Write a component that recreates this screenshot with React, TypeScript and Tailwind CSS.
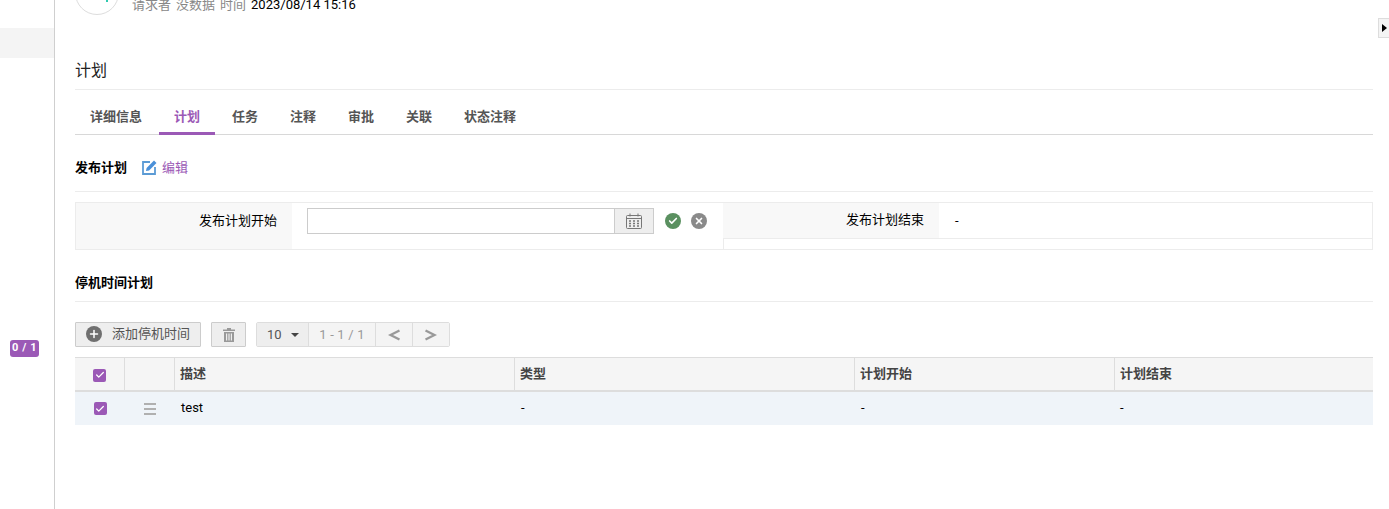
import { Check, X, Plus } from "lucide-react";

const FONT = "font-['Roboto','Noto_Sans_CJK_SC',sans-serif]";

const TABS = ["详细信息", "计划", "任务", "注释", "审批", "关联", "状态注释"];

function PurpleCheck() {
  return (
    <span className="flex h-[13px] w-[13px] items-center justify-center rounded-[2px] bg-[#9b59b6]">
      <Check className="h-[10px] w-[10px] text-white" strokeWidth={3} />
    </span>
  );
}

function CalendarIcon() {
  return (
    <svg width="16" height="16" viewBox="0 0 16 16" fill="none" stroke="#777" strokeWidth="1">
      <rect x="0.5" y="2.5" width="15" height="13" rx="1" />
      <path d="M0.5 5.5h15M4 0.5v3M12 0.5v3" />
      <path d="M3 8h2M7 8h2M11 8h2M3 10.5h2M7 10.5h2M11 10.5h2M3 13h2M7 13h2M11 13h2" strokeWidth="1.4" />
    </svg>
  );
}

function EditIcon() {
  return (
    <svg width="15" height="15" viewBox="0 0 15 15" fill="none">
      <path d="M8 2H1v12h12V7" stroke="#5b9bd5" strokeWidth="1.8" />
      <path d="M4 11l.6-3.1L12 .5l2.5 2.5L7.1 10.4z" fill="#4a90d9" />
    </svg>
  );
}

function TrashIcon() {
  return (
    <svg width="12" height="14" viewBox="0 0 12 14">
      <path d="M4 0h4v1.5h4V3H0V1.5h4z" fill="#999999" />
      <path d="M1 4h10v10H1zM3 5.5v7h1.2v-7zM5.4 5.5v7h1.2v-7zM7.8 5.5v7H9v-7z" fill="#999999" fillRule="evenodd" />
    </svg>
  );
}

function HandleIcon() {
  return (
    <svg width="12" height="12" viewBox="0 0 12 12" fill="#b0b0b0">
      <rect y="0" width="12" height="2" />
      <rect y="5" width="12" height="2" />
      <rect y="10" width="12" height="2" />
    </svg>
  );
}

function Arrow({ dir }: { dir: "left" | "right" }) {
  return (
    <svg width="12" height="12" viewBox="0 0 12 12" fill="none" stroke="#999999" strokeWidth="2.4">
      <path d={dir === "left" ? "M11.5 1.5L2.5 6l9 4.5" : "M0.5 1.5L9.5 6l-9 4.5"} />
    </svg>
  );
}

export default function App() {
  return (
    <div className={`${FONT} relative flex h-[509px] w-[1389px] overflow-hidden bg-white text-[13px] text-black`}>
      {/* Sidebar */}
      <aside className="h-full w-[55px] shrink-0 border-r border-[#cfcfcf] pt-[28px]">
        <div className="h-[30px] bg-[#f4f4f4]" />
        <div className="mt-[282px] ml-[10px] flex h-[17px] w-[29px] items-center justify-center rounded-[3px] bg-[#9b59b6] text-[11px] font-bold tracking-[0.6px] text-white">
          0 / 1
        </div>
      </aside>

      {/* Main */}
      <main className="min-w-0 flex-1 pl-[20px] pr-[16px]">
        <div className="-mt-[29px] flex h-[44px] items-start">
          <div className="relative h-[44px] w-[44px] shrink-0 rounded-full border border-[#dddddd]">
            <span className="absolute bottom-[12px] left-[30px] h-[3px] w-[2px] bg-[#30c9b0]" />
          </div>
          <div className="relative top-[27px] ml-[13px] flex items-center leading-none text-[#888888]">
            <span>请求者</span>
            <span className="ml-[5px]">没数据</span>
            <span className="ml-[5px]">时间</span>
            <span className="ml-[5px] text-black">2023/08/14 15:16</span>
          </div>
        </div>

        <h1 className="mt-[40px] flex h-[35px] items-center border-b border-[#ececec] pb-[3px] text-[16px] font-normal text-[#222222]">
          计划
        </h1>

        <nav className="mt-[10px] flex h-[35px] gap-[2px] border-b border-[#d8d8d8]">
          {TABS.map((t) => (
            <div
              key={t}
              className={`flex h-[35px] items-center px-[15px] pt-[1px] font-bold ${
                t === "计划" ? "border-b-[3px] border-[#9b59b6] text-[#9b59b6]" : "pb-[3px] text-[#555555]"
              }`}
            >
              {t}
            </div>
          ))}
        </nav>

        {/* Release plan */}
        <div className="flex h-[57px] items-start border-b border-[#ececec] pt-[23px]">
          <span className="mr-[15px] font-bold">发布计划</span>
          <span className="mt-[2px]">
            <EditIcon />
          </span>
          <span className="ml-[5px] text-[#9b59b6]">编辑</span>
        </div>

        <div className="mt-[10px] flex h-[48px] border border-[#ececec]">
          <div className="flex w-[216px] items-start justify-end bg-[#f8f8f8] pr-[15px] pt-[8px]">发布计划开始</div>
          <div className="flex w-[431px] items-start pl-[15px] pt-[5px]">
            <div className="flex h-[26px] w-[347px] border border-[#cccccc]">
              <div className="flex-1 rounded-[2px] bg-white" />
              <div className="flex w-[39px] items-center justify-center border-l border-[#cccccc] bg-[#eeeeee]">
                <CalendarIcon />
              </div>
            </div>
            <span className="ml-[11px] mt-[5px] flex h-[16px] w-[16px] items-center justify-center rounded-full bg-[#5a9060]">
              <Check className="h-[10px] w-[10px] text-white" strokeWidth={4} />
            </span>
            <span className="ml-[10px] mt-[5px] flex h-[16px] w-[16px] items-center justify-center rounded-full bg-[#8a8a8a]">
              <X className="h-[10px] w-[10px] text-white" strokeWidth={4} />
            </span>
          </div>
          <div className="flex-1">
            <div className="flex h-[36px] border-b border-[#ececec]">
              <div className="flex w-[216px] items-center justify-end bg-[#f8f8f8] pb-[1px] pr-[15px]">发布计划结束</div>
              <div className="pl-[16px] pt-[8px]">-</div>
            </div>
            <div className="h-[10px] border-l border-[#ececec]" />
          </div>
        </div>

        {/* Downtime plan */}
        <div className="mt-[18px] flex h-[34px] items-center border-b border-[#ececec] pb-[3px] font-bold">停机时间计划</div>

        <div className="mt-[20px] flex h-[25px] text-[#555555]">
          <button className="flex w-[126px] items-center rounded-[1px] border border-[#cccccc] bg-[#eeeeee] pb-[1px] pl-[10px]">
            <span className="flex h-[16px] w-[16px] items-center justify-center rounded-full bg-[#6f6f6f]">
              <Plus className="h-[12px] w-[12px] text-white" strokeWidth={3} />
            </span>
            <span className="ml-[10px]">添加停机时间</span>
          </button>
          <button className="ml-[10px] flex w-[35px] items-center justify-center rounded-[1px] border border-[#cccccc] bg-[#eeeeee]">
            <TrashIcon />
          </button>
          <div className="ml-[10px] flex rounded-[2px] border border-[#dddddd]">
            <div className="flex w-[52px] items-center border-r border-[#dddddd] bg-[#eeeeee] pl-[10px]">
              10
              <span className="ml-[9px] h-0 w-0 border-x-[4px] border-t-[4px] border-x-transparent border-t-[#444444]" />
            </div>
            <div className="flex w-[67px] items-center justify-center border-r border-[#dddddd] bg-[#f4f4f4] tracking-[0.2px] text-[#999999]">1 - 1 / 1</div>
            <div className="flex w-[37px] items-center justify-center border-r border-[#dddddd] bg-[#f4f4f4]">
              <Arrow dir="left" />
            </div>
            <div className="flex w-[36px] items-center justify-center bg-[#f4f4f4]">
              <Arrow dir="right" />
            </div>
          </div>
        </div>

        {/* Table */}
        <div className="mt-[10px]">
          <div className="flex h-[35px] border-b-2 border-t border-[#dddddd] bg-[#f5f5f5] font-bold text-[#444444]">
            <div className="flex w-[50px] items-center justify-center border-r border-[#dddddd] pt-[2px]"><PurpleCheck /></div>
            <div className="w-[50px] border-r border-[#dddddd]" />
            <div className="flex w-[340px] items-center border-r border-[#dddddd] pl-[5px]">描述</div>
            <div className="flex w-[340px] items-center border-r border-[#dddddd] pl-[5px]">类型</div>
            <div className="flex w-[260px] items-center border-r border-[#dddddd] pl-[5px]">计划开始</div>
            <div className="flex flex-1 items-center pl-[5px]">计划结束</div>
          </div>
          <div className="flex h-[33px] bg-[#eff4f9]">
            <div className="flex w-[50px] items-center justify-center"><PurpleCheck /></div>
            <div className="flex w-[50px] items-center justify-center">
              <HandleIcon />
            </div>
            <div className="flex w-[340px] items-center pb-[2px] pl-[6px]">test</div>
            <div className="flex w-[340px] items-center pb-[2px] pl-[6px]">-</div>
            <div className="flex w-[260px] items-center pb-[2px] pl-[6px]">-</div>
            <div className="flex flex-1 items-center pb-[2px] pl-[5px]">-</div>
          </div>
        </div>
      </main>

      {/* Panel toggle */}
      <div className="absolute right-0 top-[18px] flex h-[20px] w-[11px] items-center justify-center border border-r-0 border-[#dddddd] bg-[#f4f4f4]">
        <span className="h-0 w-0 border-y-[4px] border-l-[5px] border-y-transparent border-l-black" />
      </div>
    </div>
  );
}
